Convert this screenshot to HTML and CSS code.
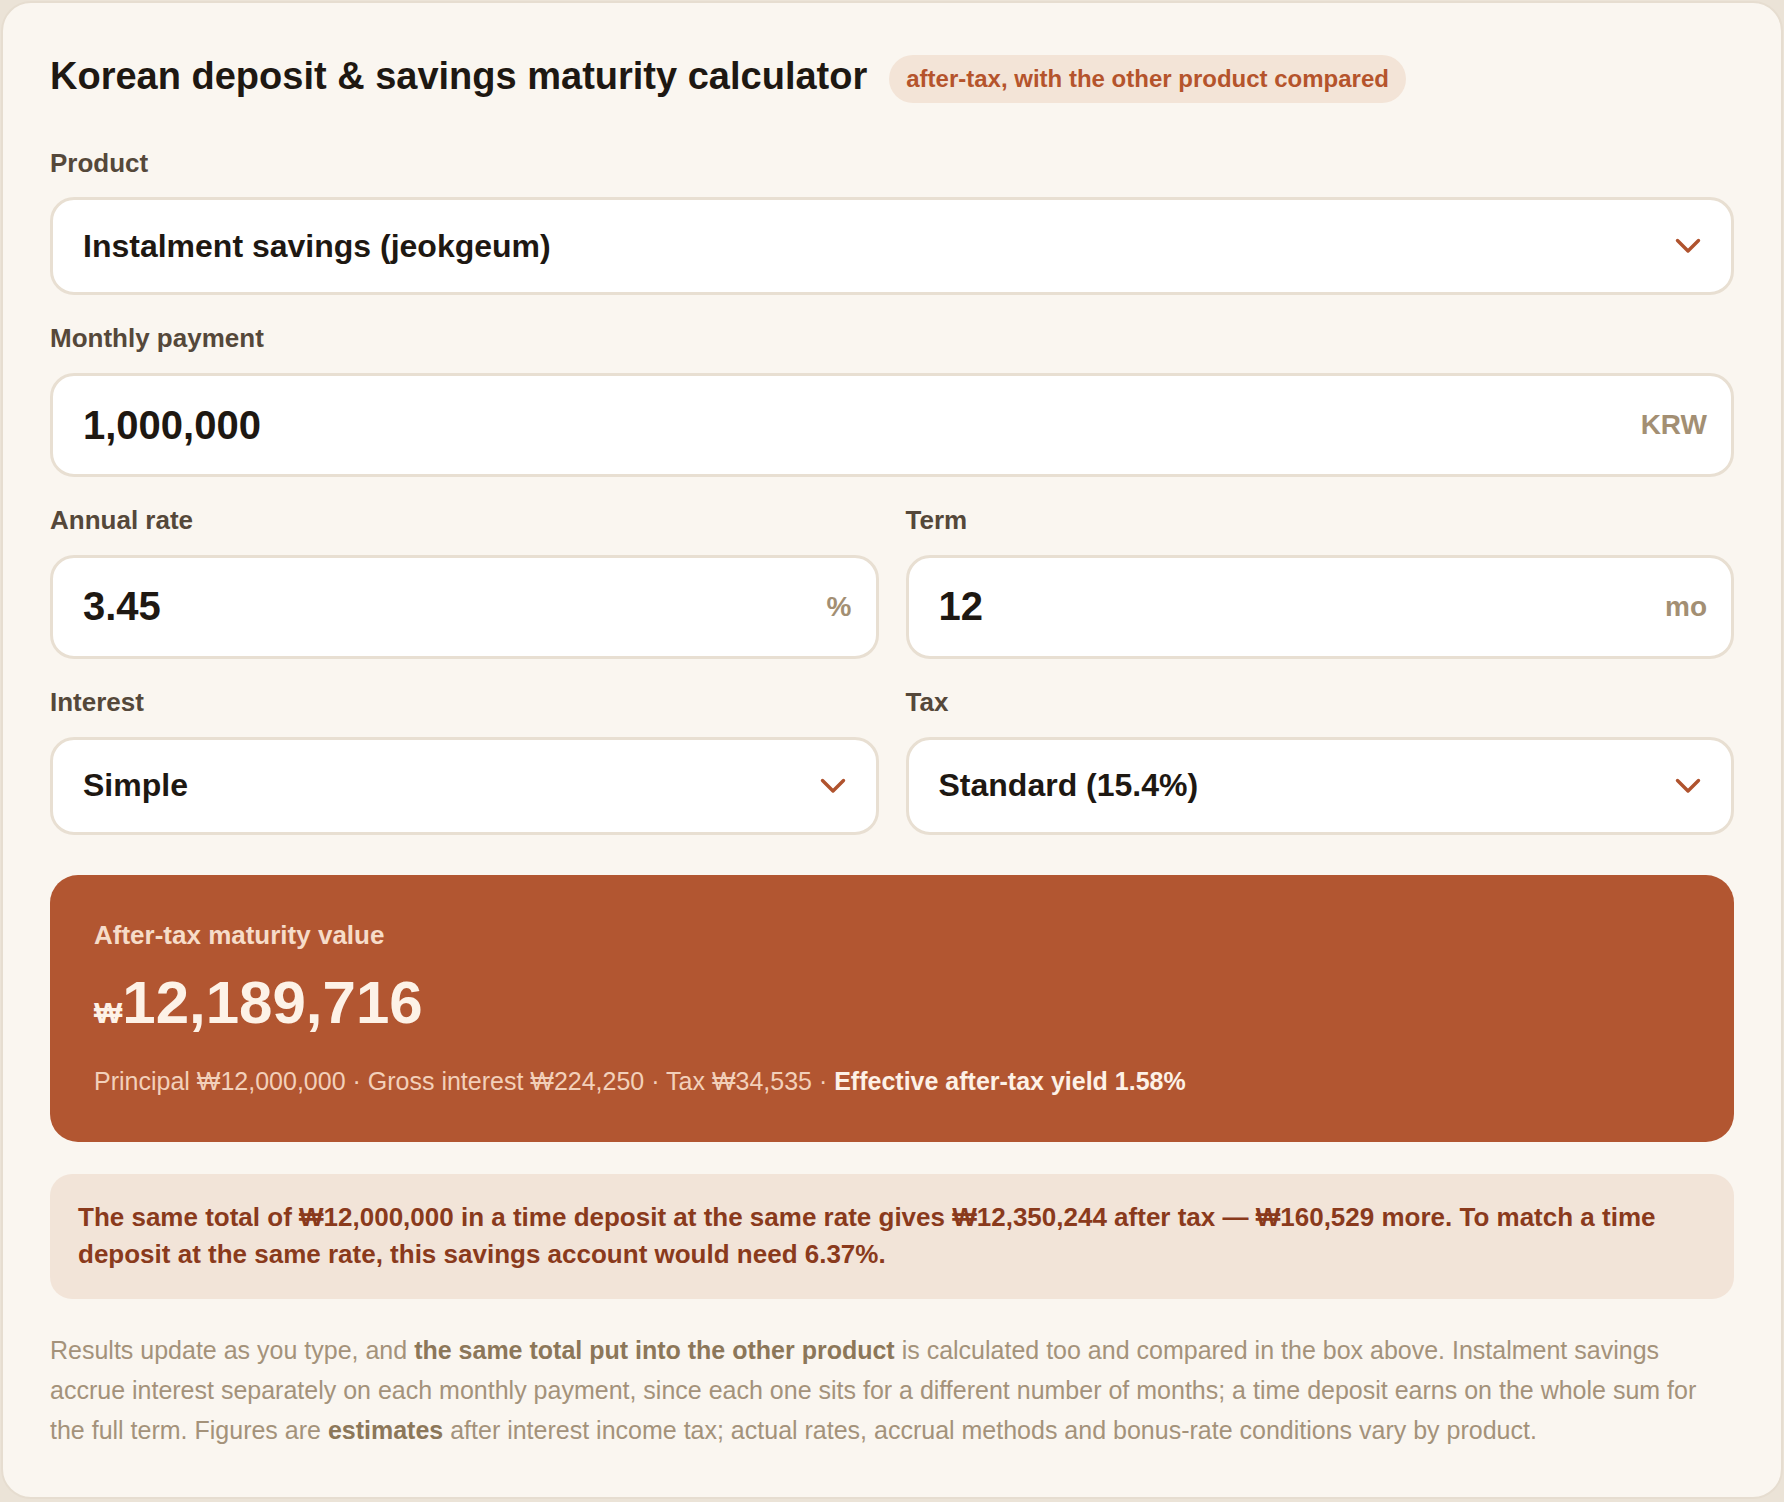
FILE: index.html
```html
<!DOCTYPE html>
<html lang="en">
<head>
<meta charset="utf-8">
<title>Korean deposit &amp; savings maturity calculator</title>
<link rel="stylesheet" href="styles.css">
</head>
<body>
<main class="card">
  <header class="head">
    <h1 class="title">Korean deposit &amp; savings maturity calculator</h1>
    <span class="badge">after-tax, with the other product compared</span>
  </header>

  <section class="form">
    <div class="field">
      <div class="label">Product</div>
      <div class="control select">
        <span class="select-text">Instalment savings (jeokgeum)</span>
        <svg class="chev" width="26" height="16" viewBox="0 0 26 16" aria-hidden="true"><path d="M2.5 2.5 L13 13 L23.5 2.5" fill="none" stroke="#b0532e" stroke-width="3.4" stroke-linecap="round" stroke-linejoin="round"/></svg>
      </div>
    </div>

    <div class="field">
      <div class="label">Monthly payment</div>
      <div class="control input">
        <span class="input-text">1,000,000</span>
        <span class="unit">KRW</span>
      </div>
    </div>

    <div class="row">
      <div class="field">
        <div class="label">Annual rate</div>
        <div class="control input">
          <span class="input-text">3.45</span>
          <span class="unit">%</span>
        </div>
      </div>
      <div class="field">
        <div class="label">Term</div>
        <div class="control input">
          <span class="input-text">12</span>
          <span class="unit">mo</span>
        </div>
      </div>
    </div>

    <div class="row">
      <div class="field">
        <div class="label">Interest</div>
        <div class="control select">
          <span class="select-text">Simple</span>
          <svg class="chev" width="26" height="16" viewBox="0 0 26 16" aria-hidden="true"><path d="M2.5 2.5 L13 13 L23.5 2.5" fill="none" stroke="#b0532e" stroke-width="3.4" stroke-linecap="round" stroke-linejoin="round"/></svg>
        </div>
      </div>
      <div class="field">
        <div class="label">Tax</div>
        <div class="control select">
          <span class="select-text">Standard (15.4%)</span>
          <svg class="chev" width="26" height="16" viewBox="0 0 26 16" aria-hidden="true"><path d="M2.5 2.5 L13 13 L23.5 2.5" fill="none" stroke="#b0532e" stroke-width="3.4" stroke-linecap="round" stroke-linejoin="round"/></svg>
        </div>
      </div>
    </div>
  </section>

  <section class="result">
    <div class="result-label">After-tax maturity value</div>
    <div class="result-value"><span class="won">₩</span>12,189,716</div>
    <div class="result-sub">Principal ₩12,000,000 · Gross interest ₩224,250 · Tax ₩34,535 · <strong>Effective after-tax yield 1.58%</strong></div>
  </section>

  <section class="compare">
    The same total of ₩12,000,000 in a time deposit at the same rate gives ₩12,350,244 after tax — ₩160,529 more. To match a time deposit at the same rate, this savings account would need 6.37%.
  </section>

  <p class="note">Results update as you type, and <strong>the same total put into the other product</strong> is calculated too and compared in the box above. Instalment savings accrue interest separately on each monthly payment, since each one sits for a different number of months; a time deposit earns on the whole sum for the full term. Figures are <strong>estimates</strong> after interest income tax; actual rates, accrual methods and bonus-rate conditions vary by product.</p>
</main>
</body>
</html>
```

FILE: styles.css
```css
* { box-sizing: border-box; }

html, body {
  margin: 0;
  padding: 0;
}

body {
  background: #ebe3d7;
  font-family: "Liberation Sans", Arial, "DejaVu Sans", sans-serif;
  color: #1e1812;
}

.card {
  margin: 1px;
  background: #faf6f0;
  border: 2px solid #e6ddd0;
  border-radius: 30px;
  padding: 51px 47px 47px;
}

.head {
  display: flex;
  align-items: center;
  gap: 22px;
  margin-bottom: 42px;
}

.title {
  margin: 0 0 5px;
  font-size: 38px;
  font-weight: 700;
  line-height: 1.2;
  color: #1e1812;
}

.badge {
  font-size: 24px;
  font-weight: 700;
  line-height: 34px;
  padding: 7px 17px;
  border-radius: 999px;
  background: #f3e4d7;
  color: #b5542c;
  white-space: nowrap;
}

.form {
  display: flex;
  flex-direction: column;
  gap: 27px;
}

.row {
  display: grid;
  grid-template-columns: 1fr 1fr;
  column-gap: 27px;
}

.label {
  font-size: 26px;
  font-weight: 700;
  line-height: 1.3;
  color: #55483a;
  margin-bottom: 17px;
}

.control {
  display: flex;
  align-items: center;
  justify-content: space-between;
  background: #ffffff;
  border: 3px solid #e8dfd2;
  border-radius: 24px;
  padding: 0 24px 0 30px;
}

.select {
  height: 98px;
  padding-right: 30px;
}

.input {
  height: 104px;
}

.select-text {
  font-size: 32px;
  font-weight: 700;
  color: #1e1812;
}

.input-text {
  font-size: 40px;
  font-weight: 700;
  color: #1e1812;
}

.unit {
  font-size: 28px;
  font-weight: 700;
  color: #a38f73;
}

.chev {
  display: block;
  flex: none;
}

.result {
  margin-top: 40px;
  background: #b25631;
  border-radius: 28px;
  padding: 44px 44px 42px;
  color: #fdf1e6;
}

.result-label {
  font-size: 26px;
  font-weight: 700;
  line-height: 1.3;
  color: #f6dcc9;
  margin-bottom: 17px;
}

.result-value {
  font-size: 60px;
  font-weight: 700;
  line-height: 66px;
  color: #fdf2e7;
  margin-bottom: 17px;
}

.won {
  font-size: 30px;
}

.result-sub {
  font-size: 25px;
  line-height: 1.5;
  color: #f2d0ba;
}

.result-sub strong {
  color: #fdf1e6;
  font-weight: 700;
}

.compare {
  margin-top: 32px;
  background: #f2e4d8;
  border-radius: 22px;
  padding: 25px 28px 27px;
  font-size: 26px;
  line-height: 1.41;
  font-weight: 700;
  color: #8a3a1c;
}

.note {
  margin: 31px 0 0;
  font-size: 25px;
  line-height: 40px;
  color: #a4927a;
}

.note strong {
  color: #8c7759;
  font-weight: 700;
}
```
